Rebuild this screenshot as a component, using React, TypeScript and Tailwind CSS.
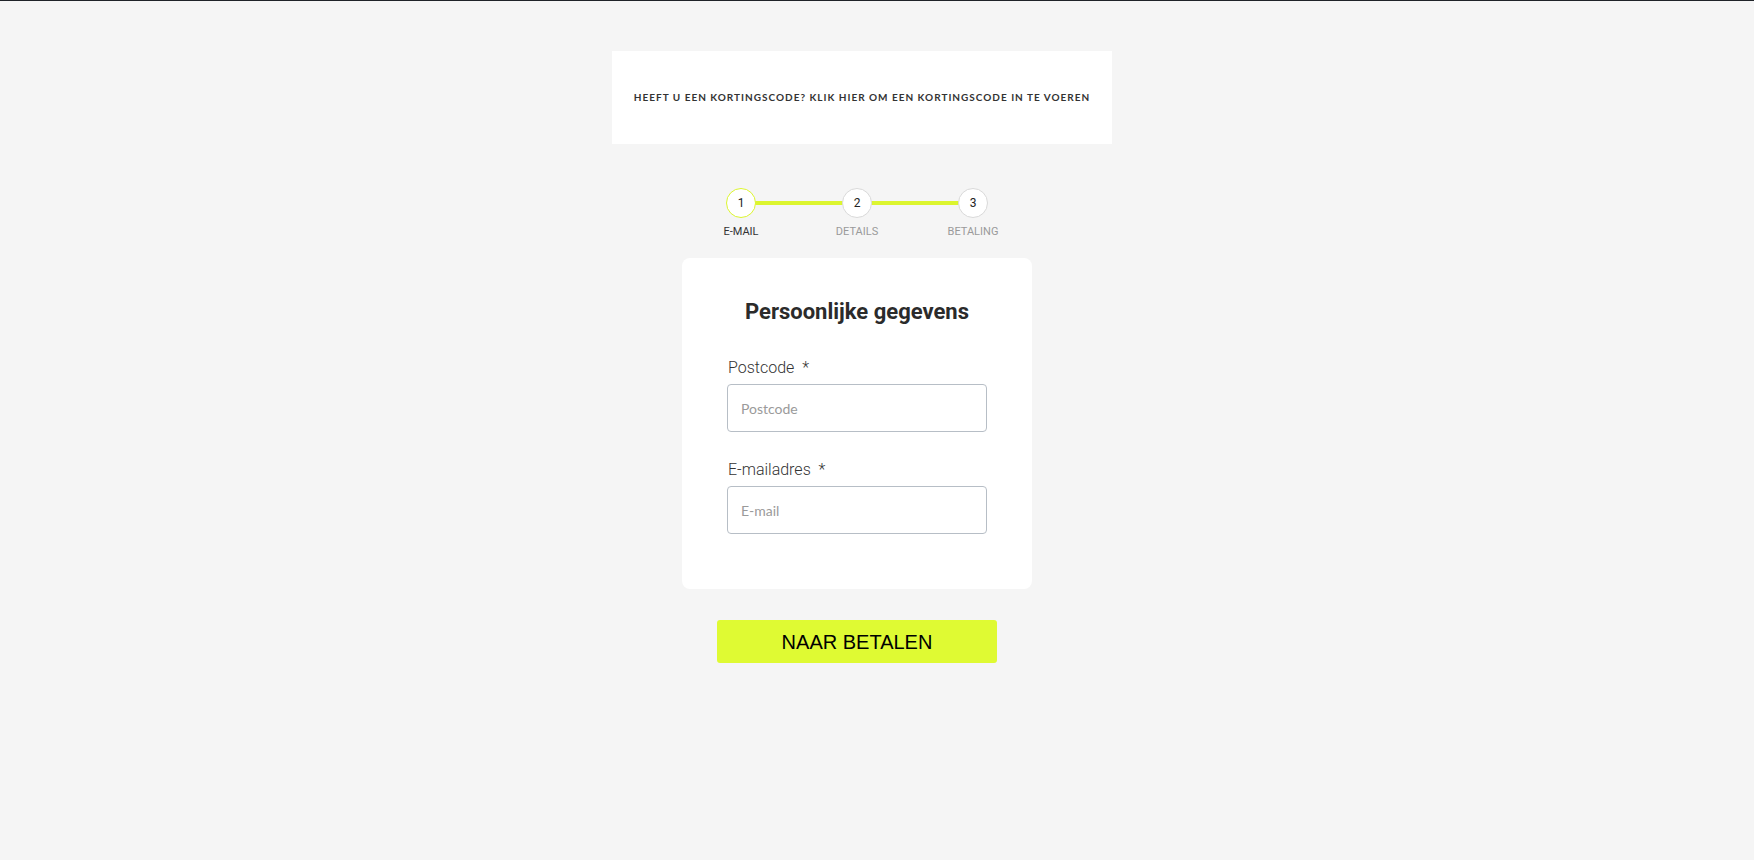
import React from "react";

const steps = [
  { n: 1, label: "E-MAIL", active: true },
  { n: 2, label: "DETAILS", active: false },
  { n: 3, label: "BETALING", active: false },
];

function Stepper() {
  return (
    <div className="relative grid grid-cols-[116px_116px_116px]">
      <div className="absolute left-[58px] right-[58px] top-[13px] h-[4px] bg-[#dcf52f]" />
      {steps.map((s) => (
        <div key={s.n} className="relative flex flex-col items-center">
          <div
            className={
              "flex h-[30px] w-[30px] items-center justify-center rounded-full border bg-white text-[12px] text-[#222] " +
              (s.active ? "border-[#dcf52f]" : "border-[#d9d9d9]")
            }
          >
            {s.n}
          </div>
          <span
            className={
              "mt-[7px] text-[11px] leading-[13px] " +
              (s.active ? "text-[#333]" : "text-[#9a9a9a]")
            }
          >
            {s.label}
          </span>
        </div>
      ))}
    </div>
  );
}

function Field({ label, placeholder }: { label: string; placeholder: string }) {
  return (
    <label className="flex flex-col">
      <span className="pl-px text-[16px] font-light leading-[19px] text-[#333]">
        {label}&nbsp; *
      </span>
      <input
        placeholder={placeholder}
        className="mt-[7px] h-[48px] w-full rounded-[4px] border border-[#b7bec6] bg-white px-[13px] font-['Lato',sans-serif] text-[14px] text-[#333] outline-none placeholder:text-[#9a9a9a]"
      />
    </label>
  );
}

export default function App() {
  return (
    <div className="min-h-[860px] border-t border-[#1f2328] bg-[#f5f5f5] font-['Roboto','Liberation_Sans',sans-serif]">
      <div className="flex flex-col items-center pr-[40px] pt-[50px]">
        <div className="ml-[10px] flex h-[93px] w-[500px] items-center justify-center bg-white">
          <p className="font-['Lato',sans-serif] text-[10px] font-bold tracking-[1px] text-[#333]">
            HEEFT U EEN KORTINGSCODE? KLIK HIER OM EEN KORTINGSCODE IN TE VOEREN
          </p>
        </div>

        <div className="mt-[44px]">
          <Stepper />
        </div>

        <div className="mt-[20px] w-[350px] rounded-[8px] bg-white px-[45px] pb-[55px] pt-[41px]">
          <h2 className="text-center text-[22px] font-bold leading-[26px] text-[#2b2b2b]">
            Persoonlijke gegevens
          </h2>
          <div className="mt-[33px] flex flex-col gap-[28px]">
            <Field label="Postcode" placeholder="Postcode" />
            <Field label="E-mailadres" placeholder="E-mail" />
          </div>
        </div>

        <button className="mt-[31px] h-[43px] w-[280px] rounded-[3px] bg-[#dffa33] font-['Liberation_Sans',Arial,sans-serif] text-[20px] text-black">
          NAAR BETALEN
        </button>
      </div>
    </div>
  );
}
